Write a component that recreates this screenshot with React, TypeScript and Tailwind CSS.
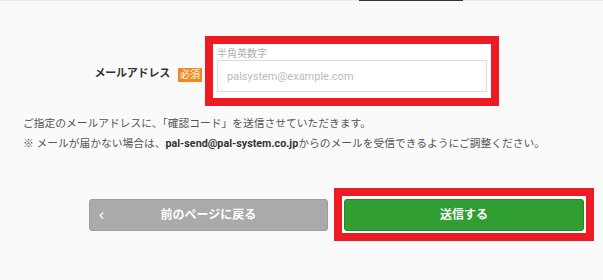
import { ChevronLeft } from "lucide-react";

const font = "font-['Roboto','Noto_Sans_CJK_JP',sans-serif]";

export default function App() {
  return (
    <div className={`w-[603px] h-[280px] overflow-hidden bg-[#fafafa] text-[#333] ${font}`}>
      {/* tab underline */}
      <div className="flex h-px bg-[#ebebeb]">
        <div className="ml-[359px] w-[104px] bg-[#333]" />
      </div>

      {/* email row */}
      <div className="mt-[35px] flex items-center">
        <div className="w-[205px] flex items-center justify-end gap-[8px] pr-[3px] mt-[7px]">
          <span className="text-[11px] font-bold tracking-[-0.2px]">メールアドレス</span>
          <span className="w-[24px] h-[14px] bg-[#ee8a1f] text-white text-[10px] leading-[14px] text-center">必須</span>
        </div>
        <div className="border-8 border-[#ed1c24] bg-white px-[4px] pt-[3px] pb-[6px]">
          <div className="text-[10px] leading-[13px] text-[#b0b0b0]">半角英数字</div>
          <input
            type="text"
            placeholder="palsystem@example.com"
            className="block w-[270px] h-[32px] border border-[#dcdcdc] px-[9px] text-[11px] placeholder:text-[#bbb] outline-none"
          />
        </div>
      </div>

      {/* notes */}
      <div className="mt-[8px] pl-[23px] text-[10.75px] leading-[20px] text-[#555]">
        <p>ご指定のメールアドレスに、「確認コード」を送信させていただきます。</p>
        <p>
          ※ メールが届かない場合は、<span className="font-bold text-[#333]">pal-send@pal-system.co.jp</span>からのメールを受信できるようにご調整ください。
        </p>
      </div>

      {/* buttons */}
      <div className="mt-[34px] flex items-center gap-[6px] pl-[89px]">
        <button className="relative w-[239px] h-[32px] rounded-[3px] bg-[#aaa] border border-[#9d9d9d] text-white text-[12px] font-bold">
          <ChevronLeft size={11} strokeWidth={2.5} className="absolute left-[6px] top-[10px]" />
          前のページに戻る
        </button>
        <div className="border-8 border-[#ed1c24] bg-white pl-[2px] pr-[2px] pt-[3px] pb-[2px]">
          <button className="w-[240px] h-[32px] rounded-[3px] bg-[#319e31] border border-[#288628] text-white text-[12px] font-bold">
            送信する
          </button>
        </div>
      </div>
    </div>
  );
}
